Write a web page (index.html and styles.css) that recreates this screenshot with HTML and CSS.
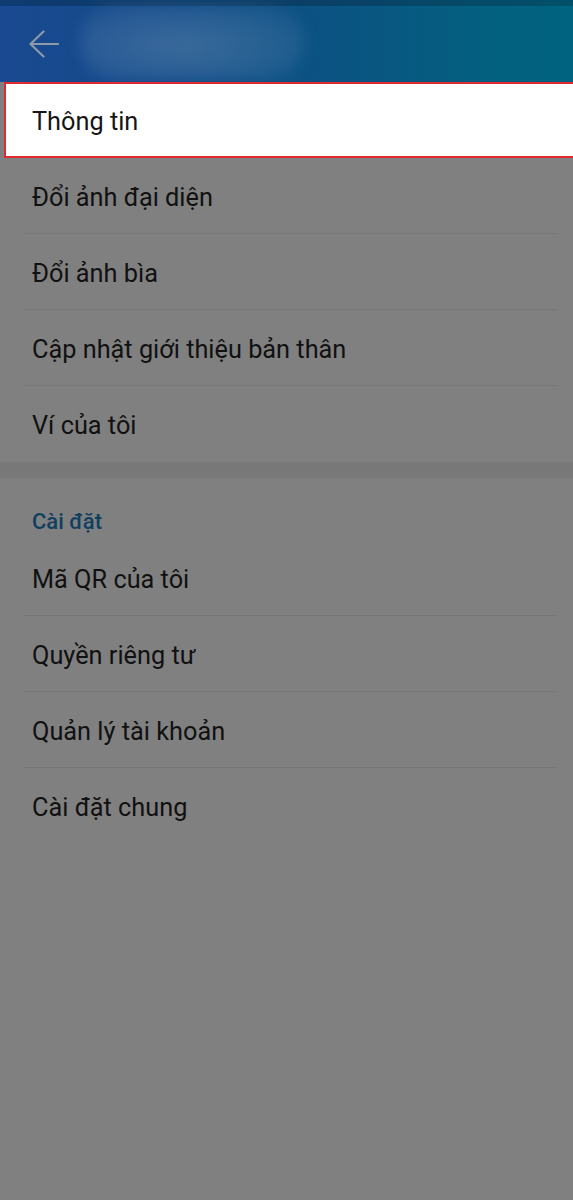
FILE: index.html
```html
<!DOCTYPE html>
<html lang="vi">
<head>
<meta charset="utf-8">
<title>Menu</title>
<link rel="stylesheet" href="styles.css">
</head>
<body>
<header class="appbar">
  <div class="status"></div>
  <div class="blob"></div>
  <div class="bar">
    <svg class="back" width="30" height="28" viewBox="0 0 30 28" aria-hidden="true">
      <path d="M1.5 14 H29 M14.5 1.5 L1.5 14 L14.5 26.5" fill="none" stroke="#8c99ab" stroke-width="2.2" stroke-linecap="round" stroke-linejoin="round"/>
    </svg>
  </div>
</header>
<main>
  <ul class="group">
    <li class="row selected"><span>Thông tin</span></li>
    <li class="row"><span>Đổi ảnh đại diện</span></li>
    <li class="row"><span>Đổi ảnh bìa</span></li>
    <li class="row"><span>Cập nhật giới thiệu bản thân</span></li>
    <li class="row"><span>Ví của tôi</span></li>
  </ul>
  <div class="band"></div>
  <div class="section-title">Cài đặt</div>
  <ul class="group">
    <li class="row"><span>Mã QR của tôi</span></li>
    <li class="row"><span>Quyền riêng tư</span></li>
    <li class="row"><span>Quản lý tài khoản</span></li>
    <li class="row"><span>Cài đặt chung</span></li>
  </ul>
</main>
</body>
</html>
```

FILE: styles.css
```css
html, body {
  margin: 0;
  padding: 0;
}
body {
  background: #808080;
  font-family: Roboto, "Noto Sans", "Liberation Sans", sans-serif;
  color: #111111;
  min-height: 1200px;
  overflow: hidden;
}
.appbar {
  position: relative;
  height: 82px;
  background: linear-gradient(90deg, #1a4991 0%, #124b88 30%, #0a5482 60%, #03607f 85%, #00637f 100%);
  overflow: hidden;
}
.status {
  height: 6px;
  background: linear-gradient(90deg, #0e3b72 0%, #0b3e66 50%, #03506a 100%);
}
.blob {
  position: absolute;
  left: 80px;
  top: 4px;
  width: 225px;
  height: 76px;
  border-radius: 44px;
  background: radial-gradient(ellipse at 45% 55%, rgba(110, 145, 180, 0.45) 0%, rgba(90, 130, 175, 0.28) 60%, rgba(70, 110, 160, 0) 100%);
  filter: blur(7px);
}
.bar {
  height: 76px;
  display: flex;
  align-items: center;
  padding-left: 29px;
}
.back {
  display: block;
}
.group {
  list-style: none;
  margin: 0;
  padding: 0;
}
.row {
  height: 76px;
  display: flex;
  align-items: center;
  margin: 0 17px 0 24px;
  padding: 3px 0 0 8px;
  border-bottom: 1px solid #777777;
  box-sizing: border-box;
  font-size: 25.3px;
}
.row:last-child {
  border-bottom: none;
}
.row.selected {
  margin: 0 0 0 4px;
  padding: 2px 0 0 26px;
  background: #ffffff;
  border: 2px solid #e02a30;
  border-right: none;
  color: #161616;
  height: 76px;
}
.band {
  height: 16px;
  background: #787878;
}
.section-title {
  height: 62px;
  box-sizing: border-box;
  padding: 32px 0 0 32px;
  font-size: 22px;
  line-height: 24px;
  font-weight: 500;
  color: #113f60;
}
```
